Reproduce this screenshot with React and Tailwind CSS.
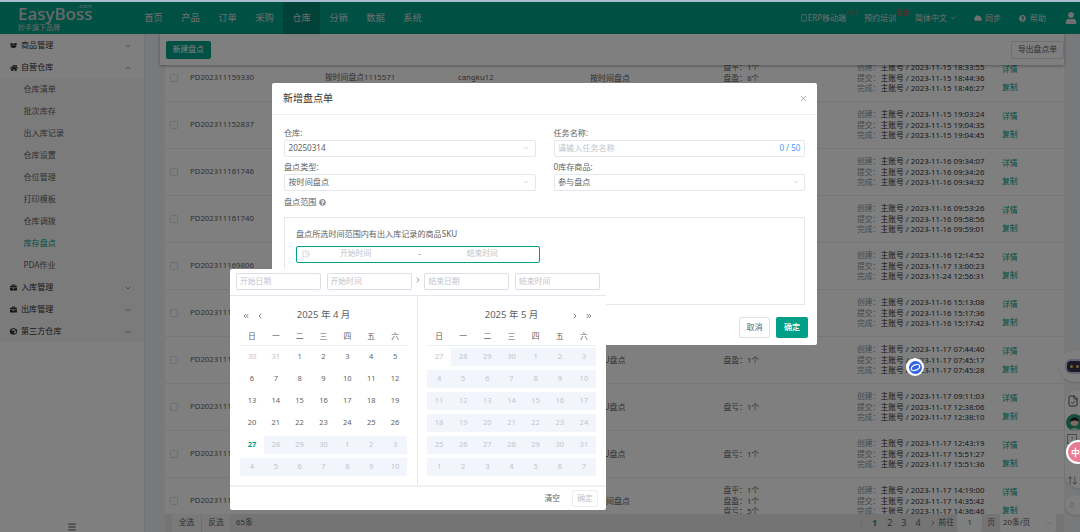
import { ChevronDown, ChevronUp, ChevronLeft, ChevronRight, ChevronsLeft, ChevronsRight, X, Clock, Smartphone, Menu, ArrowUpDown, ChevronsUp, FileCheck } from 'lucide-react';
import { FaBoxOpen, FaHome, FaBriefcase, FaCloud, FaQuestionCircle, FaUser, FaCube } from 'react-icons/fa';

const nav = ['首页', '产品', '订单', '采购', '仓库', '分销', '数据', '系统'];
const subMenu = ['仓库清单', '批次库存', '出入库记录', '仓库设置', '仓位管理', '打印模板', '仓库调拨', '库存盘点', 'PDA作业'];

const rows = [
  { id: 'PD202311159330', name: '按时间盘点1115571', wh: 'cangku12', type: '按时间盘点', count: ['盘平：1个', '盘盈：8个', '盘亏：1个'], t: ['2023-11-15 18:33:55', '2023-11-15 18:44:36', '2023-11-15 18:46:27'] },
  { id: 'PD202311152837', name: '', wh: '', type: '', count: [], t: ['2023-11-15 19:03:24', '2023-11-15 19:04:35', '2023-11-15 19:04:45'] },
  { id: 'PD202311161746', name: '', wh: '', type: '', count: [], t: ['2023-11-16 09:34:07', '2023-11-16 09:34:26', '2023-11-16 09:34:32'] },
  { id: 'PD202311161740', name: '', wh: '', type: '', count: [], t: ['2023-11-16 09:53:26', '2023-11-16 09:58:56', '2023-11-16 09:59:01'] },
  { id: 'PD202311169806', name: '', wh: '', type: '', count: [], t: ['2023-11-16 12:14:52', '2023-11-17 13:00:23', '2023-11-24 12:56:31'] },
  { id: 'PD202311161513', name: '', wh: '', type: '', count: [], t: ['2023-11-16 15:13:08', '2023-11-16 15:17:36', '2023-11-16 15:17:42'] },
  { id: 'PD202311170744', name: '', wh: '', type: 'SKU盘点', count: ['盘盈：1个'], t: ['2023-11-17 07:44:40', '2023-11-17 07:45:17', '2023-11-17 07:45:28'] },
  { id: 'PD202311170911', name: '', wh: '', type: 'SKU盘点', count: ['盘亏：1个'], t: ['2023-11-17 09:11:03', '2023-11-17 12:38:06', '2023-11-17 12:38:10'] },
  { id: 'PD202311171243', name: '', wh: '', type: 'SKU盘点', count: ['盘亏：1个'], t: ['2023-11-17 12:43:19', '2023-11-17 15:51:27', '2023-11-17 15:51:36'] },
  { id: 'PD202311171419', name: '', wh: '', type: '按时间盘点', count: ['盘平：1个', '盘盈：1个', '盘亏：5个'], t: ['2023-11-17 14:19:00', '2023-11-17 14:35:42', '2023-11-17 14:36:46'] },
];

const week = ['日', '一', '二', '三', '四', '五', '六'];
const april = [
  [30, 31, 1, 2, 3, 4, 5],
  [6, 7, 8, 9, 10, 11, 12],
  [13, 14, 15, 16, 17, 18, 19],
  [20, 21, 22, 23, 24, 25, 26],
  [27, 28, 29, 30, 1, 2, 3],
  [4, 5, 6, 7, 8, 9, 10],
];
const may = [
  [27, 28, 29, 30, 1, 2, 3],
  [4, 5, 6, 7, 8, 9, 10],
  [11, 12, 13, 14, 15, 16, 17],
  [18, 19, 20, 21, 22, 23, 24],
  [25, 26, 27, 28, 29, 30, 31],
  [1, 2, 3, 4, 5, 6, 7],
];

function SideGroup({ icon, label, open }) {
  return (
    <div className="flex h-[22px] items-center pl-[10px] pr-[12px]">
      <span className="w-[11px] text-[8px] text-[#303133]">{icon}</span>
      <span className="flex-1 text-[#303133]">{label}</span>
      {open ? <ChevronUp size={8} className="text-[#606266]" /> : <ChevronDown size={8} className="text-[#606266]" />}
    </div>
  );
}

function Row({ r }) {
  return (
    <div className="grid h-[47px] grid-cols-[25px_135px_133px_112px_80px_73.5px_133.5px_145px_62px] items-center border-b border-[#ebeef5] text-[7.8px] text-[#606266]">
      <span className="ml-[5px] h-[8px] w-[8px] rounded-[1px] border border-[#dcdfe6] bg-white" />
      <span>{r.id}</span>
      <span>{r.name}</span>
      <span>{r.wh}</span>
      <span className="text-center text-[8px]">{r.type}</span>
      <span />
      <div className="leading-[10.5px]">
        {r.count.map((c) => <div key={c}>{c}</div>)}
      </div>
      <div className="leading-[10.5px]">
        {['创建', '提交', '完成'].map((l, i) => (
          <div key={l} className="whitespace-nowrap">
            <span className="text-[#909399]">{l}：</span>
            <span className="text-[#303133]">主账号 / {r.t[i]}</span>
          </div>
        ))}
      </div>
      <div className="flex flex-col gap-[8px] leading-[10px] text-[#00a088]">
        <span>详情</span>
        <span>复制</span>
      </div>
    </div>
  );
}

function Field({ label, value, placeholder, suffix }) {
  return (
    <div className="flex-1">
      <div className="flex h-[12px] items-center text-[#606266]">{label}</div>
      <div className="mt-[0.5px] flex h-[17.5px] items-center justify-between rounded-[2px] border border-[#e4e7ed] pl-[3.5px] pr-[3.5px]">
        {value ? <span className="text-[#606266]">{value}</span> : <span className="text-[#c0c4cc]">{placeholder}</span>}
        {suffix || <ChevronDown size={8} className="mr-[1px] text-[#c0c4cc]" />}
      </div>
    </div>
  );
}

function DateInput({ text }) {
  return (
    <div className="flex h-[17px] w-[85px] items-center rounded-[2px] border border-[#dcdfe6] px-[3px] text-[#c0c4cc]">{text}</div>
  );
}

function Month({ title, days, isApril }) {
  return (
    <div className={`${isApril ? 'w-[187.5px] border-r border-[#e4e7ed] pl-[10px] pr-[9.5px]' : 'flex-1 pl-[9.5px] pr-[10px]'}`}>
      <div className="flex h-[37px] items-center justify-between pt-[2px] text-[#606266]">
        {isApril ? (
          <div className="flex w-[26px] items-center gap-[6px] pl-[2px]">
            <ChevronsLeft size={8} strokeWidth={2.5} />
            <ChevronLeft size={8} strokeWidth={2.5} />
          </div>
        ) : <span className="w-[26px]" />}
        <span className="text-[9.5px]">{title}</span>
        {isApril ? <span className="w-[26px]" /> : (
          <div className="flex w-[26px] items-center justify-end gap-[6px] pr-[3px]">
            <ChevronRight size={8} strokeWidth={2.5} />
            <ChevronsRight size={8} strokeWidth={2.5} />
          </div>
        )}
      </div>
      <div className="grid h-[12.5px] grid-cols-7 items-start border-b border-[#ebeef5] text-center text-[#606266]">
        {week.map((w) => <span key={w} className="leading-[7px]">{w}</span>)}
      </div>
      <div className="mt-[2.5px] grid grid-cols-7 gap-y-[4.5px] text-center text-[7.5px]">
        {days.flat().map((d, i) => {
          let cls = 'text-[#606266]';
          if (isApril) {
            if (i < 2) cls = 'text-[#c0c4cc]';
            if (i === 28) cls = 'font-bold text-[#00a088]';
            if (i > 28) cls = 'bg-[#f2f6fc] text-[#c0c4cc]';
          } else {
            cls = i === 0 ? 'text-[#c0c4cc]' : 'bg-[#f2f6fc] text-[#c0c4cc]';
          }
          return <span key={i} className={`h-[17.5px] leading-[17.5px] ${cls}`}>{d}</span>;
        })}
      </div>
    </div>
  );
}

export default function App() {
  return (
    <div className="relative flex h-[532px] w-[1080px] flex-col overflow-hidden bg-[#f0f2f5] text-[8px] font-['Noto_Sans','Noto_Sans_CJK_SC',sans-serif]">
      <div className="relative z-30 h-[2px] shrink-0 bg-[#a9bdd2]" />

      <header className="flex h-[32px] shrink-0 items-stretch bg-[#00a088] text-white">
        <div className="relative w-[135px] shrink-0 pl-[18px] text-[#d5d5d5]">
          <div className="mt-[2px] text-[17px] font-medium leading-[20px]">EasyBoss</div>
          <div className="absolute left-[78px] top-[1px] text-[6px] leading-[7px]">.com</div>
          <div className="text-[7px] leading-[8px]">妙手旗下品牌</div>
        </div>
        <nav className="flex text-[9.3px] text-[#dedede]">
          {nav.map((n) => (
            <div key={n} className={`flex w-[37px] items-center justify-center ${n === '仓库' ? 'bg-[#008570]' : ''}`}>{n}</div>
          ))}
        </nav>
        <div className="ml-auto flex items-center pr-[3px] text-[8px] text-[#dedede]">
          <Smartphone size={8} />
          <span>ERP移动端</span>
          <span className="mb-[10px] w-[18px] text-[5.5px] text-[#e04040]">HOT</span>
          <span>预约培训</span>
          <span className="mb-[10px] w-[19px] text-[6.5px] text-[#e04040]">免费</span>
          <span>简体中文</span>
          <ChevronDown size={8} className="ml-[2px]" />
          <FaCloud size={8} className="ml-[17px]" />
          <span className="ml-[3px]">同步</span>
          <FaQuestionCircle size={7} className="ml-[18px]" />
          <span className="ml-[4px]">帮助</span>
          <FaUser size={12} className="ml-[19px]" />
        </div>
      </header>

      <div className="flex min-h-0 flex-1">
        <aside className="relative w-[145px] shrink-0 border-r border-[#e4e7ed] bg-white pt-[0.5px] text-[8.1px]">
          <SideGroup icon={<FaBoxOpen size={7} />} label="商品管理" />
          <SideGroup icon={<FaHome size={8} />} label="自营仓库" open />
          <div className="bg-[#f7f7f7]">
            {subMenu.map((s) => (
              <div key={s} className={`flex h-[22px] items-center pl-[23.5px] ${s === '库存盘点' ? 'text-[#00a088]' : 'text-[#606266]'}`}>{s}</div>
            ))}
            <SideGroup icon={<FaBriefcase size={7} />} label="入库管理" />
            <SideGroup icon={<FaBriefcase size={7} />} label="出库管理" />
            <SideGroup icon={<FaCube size={7} />} label="第三方仓库" />
          </div>
          <Menu size={10} className="absolute bottom-0 left-[67px] text-[#303133]" />
        </aside>

        <main className="relative flex min-w-0 flex-1 flex-col bg-[#f0f2f5]">
          <div className="relative z-10 ml-[15px] mr-[16px] flex h-[31px] shrink-0 items-center justify-between bg-white pl-[6px] shadow-[0_1px_3px_rgba(0,0,0,0.35)]">
            <button type="button" className="flex h-[18px] w-[44.5px] items-center justify-center rounded-[2px] bg-[#00a088] text-[7.8px] text-white">新建盘点</button>
            <button type="button" className="flex h-[18px] w-[53px] items-center justify-center rounded-[2px] border border-[#dcdfe6] bg-white text-[7.8px] text-[#606266]">导出盘点单</button>
          </div>
          <div className="-mt-[10px] min-h-0 flex-1 overflow-hidden">
            <div className="ml-[20px] mr-[16px] bg-white">
              {rows.map((r) => <Row key={r.id} r={r} />)}
            </div>
          </div>
          <div className="absolute bottom-0 left-[20px] right-[16px] flex h-[18px] items-center bg-[#e8e8e8] text-[7.8px] text-[#606266]">
            <span className="ml-[7px] flex h-[18px] w-[29px] items-center justify-center bg-[#f5f5f5]">全选</span>
            <span className="flex h-[18px] w-[29px] items-center justify-center border-l border-[#dcdfe6] bg-[#f5f5f5]">反选</span>
            <span className="ml-[6px]">65条</span>
            <div className="ml-auto flex items-center pr-[8px]">
              <ChevronLeft size={8} className="text-[#c0c4cc]" />
              <span className="ml-[7px] text-[9px] font-bold text-[#00a088]">1</span>
              <span className="ml-[10px] text-[9px]">2</span>
              <span className="ml-[9px] text-[9px]">3</span>
              <span className="ml-[9px] text-[9px]">4</span>
              <ChevronRight size={8} className="ml-[8px]" />
              <span className="ml-[2px]">前往</span>
              <span className="ml-[3px] flex h-[18px] w-[25px] items-center justify-center rounded-[2px] bg-white">1</span>
              <span className="ml-[5px]">页</span>
              <span className="ml-[5px] flex h-[18px] w-[56px] items-center justify-between rounded-[2px] bg-white px-[3px]">20条/页<ChevronDown size={8} className="text-[#c0c4cc]" /></span>
            </div>
          </div>
        </main>
      </div>

      {/* floating tools on the right edge */}
      <div className="absolute left-[1059px] top-[350px] z-10 flex h-[32px] w-[32px] items-center rounded-full bg-white pl-[8px] shadow">
        <span className="flex h-[11px] w-[15px] items-center justify-center gap-[3px] rounded-[4px] bg-[#3a3550] ring-2 ring-[#cfc8f0]">
          <span className="h-[3px] w-[3px] rounded-full bg-[#f5c451]" />
          <span className="h-[3px] w-[3px] rounded-full bg-[#f5c451]" />
        </span>
      </div>
      <div className="absolute left-[1065px] top-[390px] z-10 flex h-[98px] w-[26px] flex-col items-start rounded-full bg-white pl-[2px] pt-[5px] shadow">
        <FileCheck size={12} className="text-[#555]" />
        <svg width="17" height="17" viewBox="0 0 17 17" className="-ml-[1px] mt-[7px]">
          <circle cx="8.5" cy="8.5" r="8.5" fill="#2f9e7e" />
          <circle cx="8.5" cy="8" r="4" fill="#f6d7c3" />
          <path d="M4 8 C4 2 13 2 13 8 C11 6 7 6 4 8 Z" fill="#1f1f2b" />
          <path d="M4 17 C5 13 12 13 13 17 Z" fill="#bfe8d8" />
        </svg>
        <span className="mt-[3px] flex h-[10px] w-[10px] items-center justify-center border border-[#999] text-[6px] leading-none text-[#777]">?</span>
        <span className="mt-[31px]"><ArrowUpDown size={11} className="text-[#888]" /></span>
      </div>
      <div className="absolute left-[1065px] top-[495px] z-10 flex h-[20px] w-[20px] items-start justify-start rounded-full bg-white pl-[2px] pt-[5px] shadow">
        <ChevronsUp size={10} className="text-[#aaa]" />
      </div>

      {/* page mask */}
      <div className="absolute inset-x-0 bottom-0 top-[2px] z-20 bg-black/50" />

      {/* dialog */}
      <div className="absolute left-[272px] top-[82.5px] z-30 h-[262.5px] w-[545px] rounded-[2px] bg-white text-[8.1px]">
        <div className="flex h-[32px] items-center justify-between border-b border-[#ebeef5] pl-[11px] pr-[9px]">
          <span className="text-[10px] text-[#303133]">新增盘点单</span>
          <X size={9} className="text-[#909399]" />
        </div>
        <div className="px-[12px] pt-[12.5px]">
          <div className="flex gap-[18px]">
            <Field label="仓库:" value="20250314" />
            <Field
              label="任务名称:"
              placeholder="请输入任务名称"
              suffix={<span className="text-[#409eff]">0 / 50</span>}
            />
          </div>
          <div className="mt-[4px] flex gap-[18px]">
            <Field label="盘点类型:" value="按时间盘点" />
            <Field label="0库存商品:" value="参与盘点" />
          </div>
          <div className="mt-[5px] flex h-[12px] items-center gap-[3px] text-[#606266]">
            盘点范围
            <FaQuestionCircle size={7} className="text-[#909399]" />
          </div>
          <div className="mt-[9px] h-[87.5px] border border-[#e4e7ed] px-[11px] pt-[10px]">
            <div className="h-[12px] leading-[12px] text-[#606266]">盘点所选时间范围内有出入库记录的商品SKU</div>
            <div className="mt-[5.5px] flex h-[17px] w-[244px] items-center rounded-[2px] border border-[#00a088] pl-[5px] text-[7.8px] text-[#c0c4cc]">
              <Clock size={8} />
              <span className="ml-[30px]">开始时间</span>
              <span className="ml-[47px] text-[#606266]">-</span>
              <span className="ml-[46px]">结束时间</span>
            </div>
          </div>
          <div className="-mr-[3px] mt-[12px] flex justify-end gap-[6px]">
            <button type="button" className="h-[21px] w-[31px] rounded-[2px] border border-[#dcdfe6] text-[#606266]">取消</button>
            <button type="button" className="h-[21px] w-[32px] rounded-[2px] bg-[#00a088] font-medium text-white">确定</button>
          </div>
        </div>
      </div>

      {/* date range popover */}
      <div className="absolute left-[230px] top-[268.5px] z-30 h-[241.5px] w-[376px] rounded-[2px] bg-white text-[7.8px]">
        <div className="absolute -top-[3px] left-[173px] h-[6px] w-[6px] rotate-45 bg-white" />
        <div className="relative flex h-[27.5px] items-center border-b border-[#e4e7ed] px-[6px]">
          <DateInput text="开始日期" />
          <div className="ml-[6px]"><DateInput text="开始时间" /></div>
          <ChevronRight size={8} className="mx-[2.5px] mb-[3px] text-[#606266]" />
          <DateInput text="结束日期" />
          <div className="ml-[6px]"><DateInput text="结束时间" /></div>
        </div>
        <div className="flex h-[191px] border-b-2 border-[#f2f2f2]">
          <Month title="2025 年 4 月" days={april} isApril />
          <Month title="2025 年 5 月" days={may} />
        </div>
        <div className="flex h-[23px] items-center justify-end gap-[12px] pr-[8px] text-[#606266]">
          <span>清空</span>
          <span className="flex h-[17px] w-[26px] items-center justify-center rounded-[2px] border border-[#ebeef5] text-[#c0c4cc]">确定</span>
        </div>
      </div>

      {/* widgets that sit above the mask */}
      <div className="absolute left-[906px] top-[358px] z-30 flex h-[18px] w-[18px] items-center justify-center rounded-full bg-white">
        <svg width="13" height="13" viewBox="0 0 13 13">
          <circle cx="6.5" cy="6.5" r="6.5" fill="#2f63e0" />
          <ellipse cx="6.5" cy="6.5" rx="4.5" ry="2.6" transform="rotate(-25 6.5 6.5)" fill="none" stroke="white" strokeWidth="1.2" />
        </svg>
      </div>
      <div className="absolute left-[1066px] top-[440px] z-30 flex h-[24px] w-[24px] items-center rounded-full border-2 border-white bg-[#e87a94] pl-[3px] text-[9px] font-bold leading-none text-white">中</div>
    </div>
  );
}
